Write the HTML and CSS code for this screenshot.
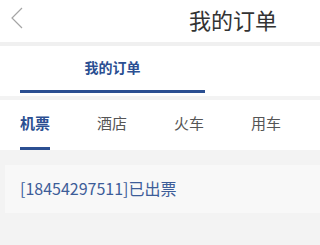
FILE: index.html
```html
<!DOCTYPE html>
<html lang="zh-CN">
<head>
    <meta charset="UTF-8">
    <meta name="viewport" content="width=device-width, initial-scale=1.0">
    <title>我的订单</title>
    <link rel="stylesheet" href="styles.css">
</head>
<body>
    <div class="header">
        <a class="back" href="#">
            <svg width="14" height="22" viewBox="0 0 14 22">
                <polyline points="12,1 2,11 12,21" fill="none" stroke="#a5a5a5" stroke-width="1.2"/>
            </svg>
        </a>
        <h1 class="title">我的订单</h1>
    </div>

    <div class="main-tab">
        <div class="main-tab-item">我的订单</div>
    </div>

    <div class="tabs">
        <div class="tab active">机票</div>
        <div class="tab">酒店</div>
        <div class="tab">火车</div>
        <div class="tab">用车</div>
    </div>

    <div class="content">
        <div class="order-card">[18454297511]已出票</div>
    </div>
</body>
</html>
```

FILE: styles.css
```css
body {
    margin: 0;
    font-family: "Noto Sans CJK SC", "Noto Sans", sans-serif;
    background-color: #f3f3f3;
    width: 320px;
    height: 245px;
    overflow: hidden;
}
.header {
    height: 42px;
    background-color: #fff;
    display: flex;
    align-items: center;
    border-bottom: 4px solid #f0f0f0;
}
.back {
    display: flex;
    margin-left: 10px;
    margin-top: -6px;
}
.title {
    margin: -4px 0 0 165px;
    font-size: 22px;
    font-weight: normal;
    color: #333;
}
.main-tab {
    background-color: #fff;
    height: 50px;
    padding-left: 20px;
}
.main-tab-item {
    width: 185px;
    height: 47px;
    box-sizing: border-box;
    padding-top: 11px;
    text-align: center;
    font-size: 14px;
    font-weight: bold;
    color: #2b4f92;
    border-bottom: 3px solid #2b4f92;
}
.tabs {
    margin-top: 4px;
    background-color: #fff;
    height: 50px;
    display: flex;
    padding-left: 20px;
    gap: 47px;
}
.tab {
    width: 30px;
    box-sizing: border-box;
    padding-top: 12px;
    font-size: 15px;
    color: #555;
    white-space: nowrap;
}
.tab.active {
    color: #2b4f92;
    font-weight: bold;
    border-bottom: 3px solid #2b4f92;
}
.content {
    padding: 15px 0 0 5px;
}
.order-card {
    background-color: #f8f8f8;
    height: 48px;
    padding-left: 15px;
    line-height: 47px;
    font-size: 16px;
    color: #3d5d99;
}
```
